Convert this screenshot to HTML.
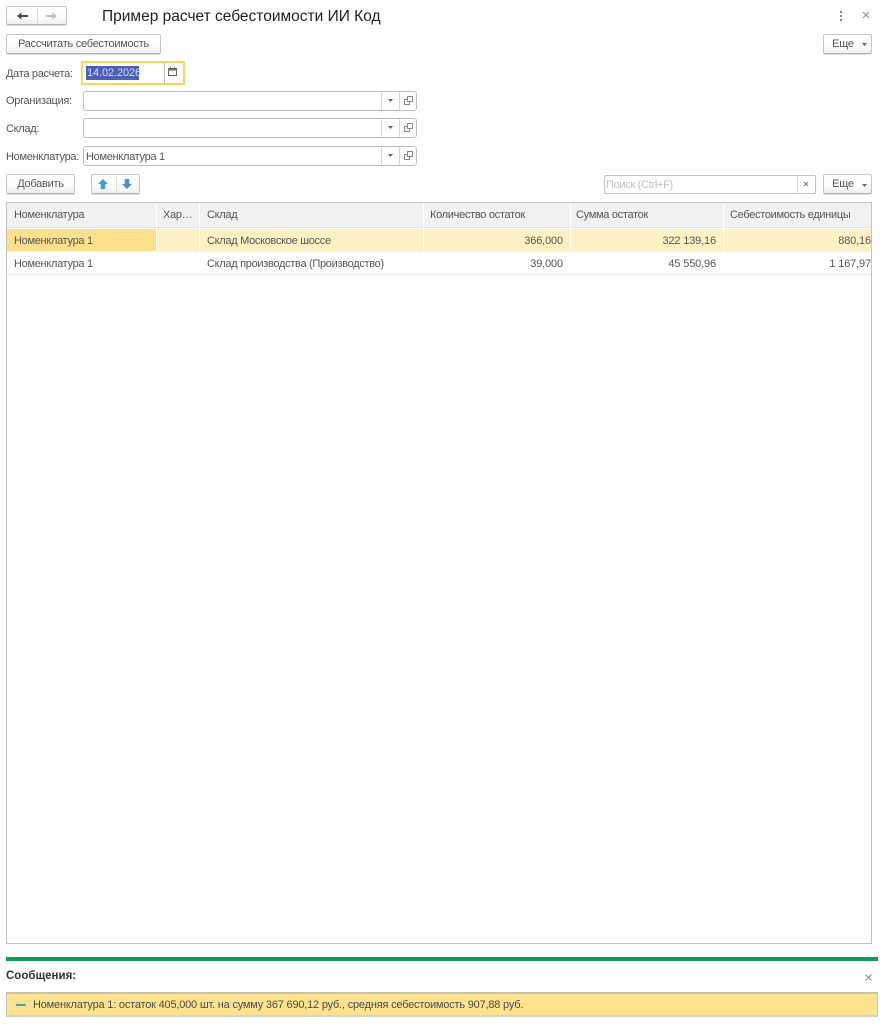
<!DOCTYPE html>
<html lang="ru"><head><meta charset="utf-8"><title>Пример расчет себестоимости ИИ Код</title>
<style>
html,body{margin:0;padding:0;background:#fff;width:882px;height:1024px;overflow:hidden}
body{position:relative;font-family:"Liberation Sans",Arial,sans-serif;font-size:11px;letter-spacing:-.3px;color:#555;filter:blur(.35px)}
.a{position:absolute;box-sizing:border-box}
.t{position:absolute;white-space:nowrap;line-height:14px}
.btn{position:absolute;box-sizing:border-box;border:1px solid #c6c6c6;border-bottom-color:#b4b4b4;border-radius:2px;background:linear-gradient(#fff,#fdfdfd 55%,#efefef);box-shadow:0 1px 0 #dedede;text-align:center;color:#555;line-height:19px;letter-spacing:-.25px}
.fld{position:absolute;box-sizing:border-box;left:83px;width:334px;height:20px;border:1px solid #bebebe;border-radius:3px;background:#fff}
.fld i{position:absolute;top:0;bottom:0;width:1px;background:#d8d8d8}
.c{position:absolute;top:0;height:25px;line-height:25px;white-space:nowrap}
.r{text-align:right;letter-spacing:-.15px}
svg{position:absolute;display:block}
</style></head><body>

<div class="btn" style="left:6px;top:6px;width:61px;height:19px"></div>
<div class="a" style="left:37px;top:7px;width:1px;height:17px;background:#dcdcdc"></div>
<svg style="left:16px;top:11px" width="13" height="10" viewBox="0 0 13 10"><path d="M1 5L5.500 1.500V4H12V6H5.500V8.500Z" fill="#4a4a4a"/></svg>
<svg style="left:45px;top:11px" width="13" height="10" viewBox="0 0 13 10"><path d="M12 5L7.500 1.500V4H1V6H7.500V8.500Z" fill="#bdbdbd"/></svg>
<div class="t" style="left:102px;top:7px;font-size:15.500px;line-height:20px;letter-spacing:0;color:#222">Пример расчет себестоимости ИИ Код</div>
<svg style="left:838px;top:10px" width="6" height="12" viewBox="0 0 6 12"><g fill="#888"><rect x="2" y="1" width="2" height="2"/><rect x="2" y="5" width="2" height="2"/><rect x="2" y="9" width="2" height="2"/></g></svg>
<svg style="left:862px;top:11px" width="8" height="8" viewBox="0 0 8 8"><path d="M1 1L7 7M7 1L1 7" stroke="#8a8a8a" stroke-width="1"/></svg>

<div class="btn" style="left:6px;top:34px;width:155px;height:20px">Рассчитать себестоимость</div>
<div class="btn" style="left:823px;top:34px;width:49px;height:20px;padding-right:9px">Еще</div>
<svg style="left:862px;top:43px" width="5" height="3" viewBox="0 0 5 3"><path d="M0 0H5L2.500 3Z" fill="#666"/></svg>

<div class="t" style="left:6px;top:67px">Дата расчета:</div>
<div class="a" style="left:81px;top:61px;width:104px;height:24px;border:2px solid #f4d860;background:#fff"></div>
<div class="a" style="left:164px;top:63px;width:1px;height:20px;background:#bdbdbd"></div>
<div class="a" style="left:86px;top:66px;width:53px;height:14px;background:#4a5fb5"></div>
<div class="t" style="left:87px;top:66px;color:#d8def5;letter-spacing:-.1px">14.02.2026</div>
<svg style="left:168px;top:67px" width="9" height="9" viewBox="0 0 9 9"><rect x="0.500" y="1.500" width="8" height="7" fill="none" stroke="#666"/><rect x="1" y="1.500" width="7" height="2" fill="#666"/><rect x="2" y="0" width="1" height="2" fill="#666"/><rect x="6" y="0" width="1" height="2" fill="#666"/></svg>

<div class="t" style="left:6px;top:94px">Организация:</div>
<div class="fld" style="top:91px"><i style="left:297px"></i><i style="left:315px"></i></div>
<div class="t" style="left:6px;top:122px">Склад:</div>
<div class="fld" style="top:118px"><i style="left:297px"></i><i style="left:315px"></i></div>
<div class="t" style="left:6px;top:150px">Номенклатура:</div>
<div class="fld" style="top:146px"><i style="left:297px"></i><i style="left:315px"></i></div>
<div class="t" style="left:86px;top:150px">Номенклатура 1</div>

<svg style="left:388px;top:99px" width="5" height="3" viewBox="0 0 5 3"><path d="M0 0H5L2.500 3Z" fill="#666"/></svg>
<svg style="left:388px;top:126px" width="5" height="3" viewBox="0 0 5 3"><path d="M0 0H5L2.500 3Z" fill="#666"/></svg>
<svg style="left:388px;top:154px" width="5" height="3" viewBox="0 0 5 3"><path d="M0 0H5L2.500 3Z" fill="#666"/></svg>
<svg style="left:404px;top:96px" width="9" height="9" viewBox="0 0 9 9"><path d="M3.500 0.500H8.500V5.500H3.500ZM3.500 3.500H0.500V8.500H5.500V5.500" fill="none" stroke="#888"/></svg>
<svg style="left:404px;top:123px" width="9" height="9" viewBox="0 0 9 9"><path d="M3.500 0.500H8.500V5.500H3.500ZM3.500 3.500H0.500V8.500H5.500V5.500" fill="none" stroke="#888"/></svg>
<svg style="left:404px;top:151px" width="9" height="9" viewBox="0 0 9 9"><path d="M3.500 0.500H8.500V5.500H3.500ZM3.500 3.500H0.500V8.500H5.500V5.500" fill="none" stroke="#888"/></svg>

<div class="btn" style="left:6px;top:174px;width:69px;height:20px">Добавить</div>
<div class="btn" style="left:91px;top:174px;width:49px;height:20px"></div>
<div class="a" style="left:116px;top:175px;width:1px;height:18px;background:#dcdcdc"></div>
<svg style="left:98px;top:179px" width="10" height="10" viewBox="0 0 10 10"><path d="M5 0L10 5H7.200V10H2.800V5H0Z" fill="#3d9bd6"/></svg>
<svg style="left:122px;top:179px" width="10" height="10" viewBox="0 0 10 10"><path d="M5 10L10 5H7.200V0H2.800V5H0Z" fill="#4a90cf"/></svg>

<div class="a" style="left:604px;top:175px;width:212px;height:19px;border:1px solid #c2c2c2;border-radius:2px;background:#fff"></div>
<div class="a" style="left:797px;top:176px;width:1px;height:17px;background:#d8d8d8"></div>
<div class="t" style="left:606px;top:178px;color:#c0c0c0">Поиск (Ctrl+F)</div>
<svg style="left:803px;top:181px" width="6" height="6" viewBox="0 0 6 6"><path d="M1 1L5 5M5 1L1 5" stroke="#777" stroke-width="1"/></svg>
<div class="btn" style="left:823px;top:174px;width:49px;height:20px;padding-right:9px">Еще</div>
<svg style="left:862px;top:184px" width="5" height="3" viewBox="0 0 5 3"><path d="M0 0H5L2.500 3Z" fill="#666"/></svg>

<div class="a" style="left:6px;top:202px;width:866px;height:742px;border:1px solid #c2c2c2;background:#fff"></div>
<div class="a" style="left:7px;top:203px;width:864px;height:25px;background:#f1f1f1;border-bottom:1px solid #e2e2e2"></div>
<div class="c" style="left:14px;top:203px">Номенклатура</div>
<div class="c" style="left:163px;top:203px">Хар…</div>
<div class="c" style="left:207px;top:203px">Склад</div>
<div class="c" style="left:430px;top:203px">Количество остаток</div>
<div class="c" style="left:576px;top:203px">Сумма остаток</div>
<div class="c" style="left:730px;top:203px">Себестоимость единицы</div>

<div class="a" style="left:7px;top:229px;width:864px;height:22px;background:#fdf1c4"></div>
<div class="a" style="left:7px;top:229px;width:149px;height:22px;background:#fde08b"></div>
<div class="a" style="left:7px;top:274px;width:864px;height:1px;background:#ebebeb"></div>
<div class="a" style="left:7px;top:251px;width:864px;height:1px;background:#f4f4f4"></div>

<div class="a" style="left:156px;top:203px;width:1px;height:48px;background:#fff"></div>
<div class="a" style="left:199px;top:203px;width:1px;height:48px;background:#fff"></div>
<div class="a" style="left:423px;top:203px;width:1px;height:48px;background:#fff"></div>
<div class="a" style="left:570px;top:203px;width:1px;height:48px;background:#fff"></div>
<div class="a" style="left:723px;top:203px;width:1px;height:48px;background:#fff"></div>

<div class="c" style="left:14px;top:229px">Номенклатура 1</div>
<div class="c" style="left:207px;top:229px">Склад Московское шоссе</div>
<div class="c r" style="left:430px;width:133px;top:229px">366,000</div>
<div class="c r" style="left:576px;width:140px;top:229px">322 139,16</div>
<div class="c r" style="left:730px;width:141px;top:229px">880,16</div>

<div class="c" style="left:14px;top:252px">Номенклатура 1</div>
<div class="c" style="left:207px;top:252px">Склад производства (Производство)</div>
<div class="c r" style="left:430px;width:133px;top:252px">39,000</div>
<div class="c r" style="left:576px;width:140px;top:252px">45 550,96</div>
<div class="c r" style="left:730px;width:141px;top:252px">1 167,97</div>

<div class="a" style="left:6px;top:957px;width:872px;height:4px;background:#0f9d58"></div>
<div class="t" style="left:6px;top:969px;font-weight:bold;font-size:11.500px;letter-spacing:0;color:#333">Сообщения:</div>
<svg style="left:865px;top:974px" width="7" height="7" viewBox="0 0 7 7"><path d="M0.500 0.500L6.500 6.500M6.500 0.500L0.500 6.500" stroke="#888" stroke-width="1"/></svg>
<div class="a" style="left:6px;top:992px;width:872px;height:25px;background:#ffe28f;border:1px solid #c8c8c8;border-top:2px solid #c6c2ae;border-bottom:2px solid #d2d2d2"></div>
<div class="a" style="left:16px;top:1004px;width:10px;height:2px;background:#4aa6a0"></div>
<div class="t" style="left:33px;top:998px;color:#4a4a4a;letter-spacing:-.2px">Номенклатура 1: остаток 405,000 шт. на сумму 367 690,12 руб., средняя себестоимость 907,88 руб.</div>

</body></html>
